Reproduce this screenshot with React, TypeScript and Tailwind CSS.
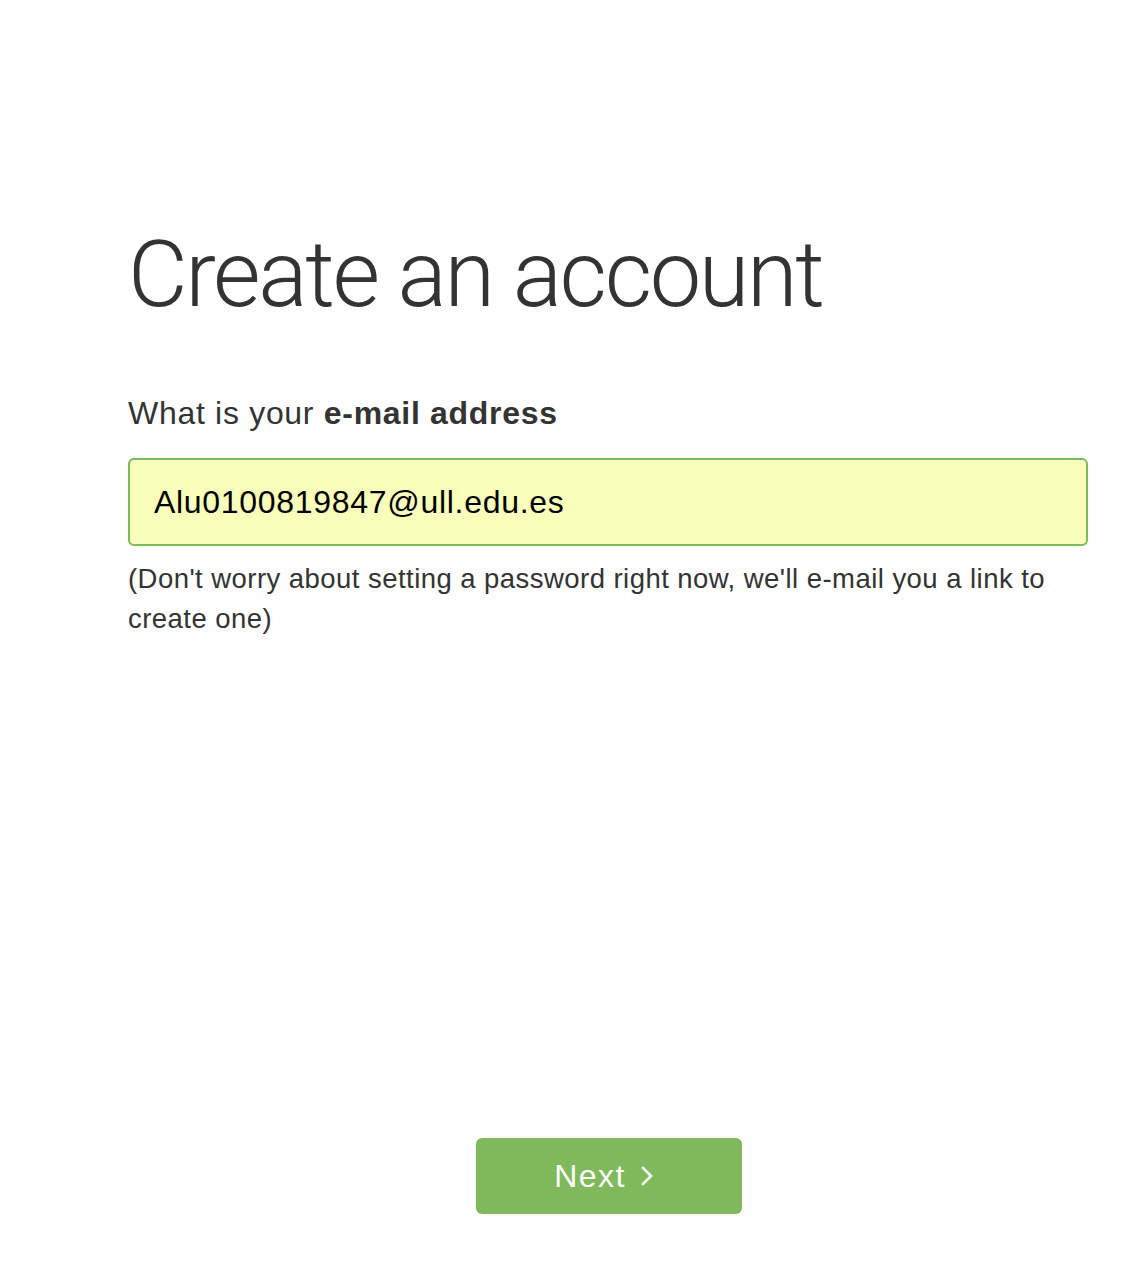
import { useState } from 'react';

export default function App() {
  const [email, setEmail] = useState('Alu0100819847@ull.edu.es');

  return (
    <div className="min-h-[1276px] w-full bg-white pl-[128px] pr-[40px] text-[#333] font-['Liberation_Sans',Arial,sans-serif]">
      <div className="flex flex-col pt-[220px]">
        {/* タイトル */}
        <h1 className="font-['Roboto',sans-serif] font-light text-[92px] leading-[110px] tracking-[-2.4px] text-[#333]">
          Create an account
        </h1>

        {/* メールアドレス */}
        <label htmlFor="email" className="mt-[63px] text-[32px] leading-[40px] tracking-[0.7px]">
          What is your <span className="font-bold">e-mail address</span>
        </label>

        <input
          id="email"
          type="email"
          value={email}
          onChange={(e) => setEmail(e.target.value)}
          className="mt-[25px] h-[88px] w-full rounded-[6px] border-2 border-[#7dbb58] bg-[#f9feba] px-[24px] text-[32px] tracking-[0.7px] text-black outline-none font-['Liberation_Sans',Arial,sans-serif]"
        />

        <p className="mt-[13px] text-[27.5px] leading-[40px] tracking-[0.45px] text-[#333]">
          (Don't worry about setting a password right now, we'll e-mail you a link to create one)
        </p>

        {/* 次へ */}
        <div className="mt-[499px] flex justify-center pl-[2px]">
          <button className="flex h-[76px] w-[266px] items-center justify-center gap-[14px] rounded-[6px] bg-[#80b95b] pr-[10px] text-[32px] tracking-[1.4px] text-white">
            <span>Next</span>
            <svg width="14" height="22" viewBox="0 0 14 22" fill="none" stroke="currentColor" strokeWidth="2.6" strokeLinecap="square">
              <path d="M3 3l8 8-8 8" />
            </svg>
          </button>
        </div>
      </div>
    </div>
  );
}
